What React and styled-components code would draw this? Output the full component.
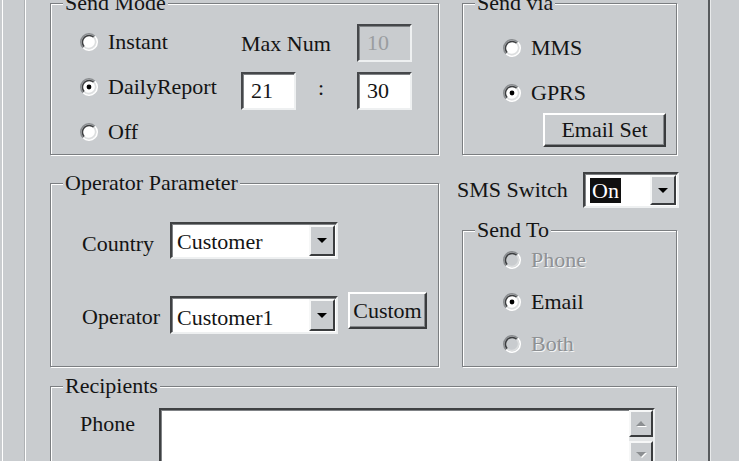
import styled, { createGlobalStyle } from "styled-components";

const FACE = "#c9cccf";
const INK = "#141414";
const SERIF = `"Liberation Serif", "Times New Roman", "DejaVu Serif", serif`;

const GlobalStyle = createGlobalStyle`
  html, body { margin: 0; padding: 0; background: ${FACE}; overflow: hidden; }
  body {
    font-family: ${SERIF};
    font-size: 22px;
    color: ${INK};
  }
  * { box-sizing: border-box; }
`;

const Screen = styled.div`
  width: 737px;
  height: 461px;
  margin-left: 2px;
  border-left: 1px solid #fff;
  overflow: hidden;
  font-family: ${SERIF};
  font-size: 22px;
`;

const Frame = styled.div`
  margin-left: 21px;
  width: 686px;
  min-height: 461px;
  border-left: 1px solid #aeb1b4;
  border-right: 2px solid #575a5d;
  box-shadow: inset 1px 0 0 #fff, 1px 0 0 #e8eaeb;
  padding: 3px 0 0 25px;
`;

const Layout = styled.div`
  display: grid;
  grid-template-columns: 389px 215px;
  grid-template-rows: 152px auto auto;
  column-gap: 23px;
  row-gap: 17px;
`;

const GroupBox = styled.div`
  position: relative;
  border: 1px solid #7b7e81;
  box-shadow: inset 1px 1px 0 #fff, 1px 1px 0 #fff;
  height: ${(p) => p.$h}px;
  margin-top: ${(p) => p.$mt || 0}px;
  padding: ${(p) => p.$pad};
  grid-column: ${(p) => (p.$span ? "1 / -1" : "auto")};
`;

const Caption = styled.span`
  position: absolute;
  top: -13px;
  left: 12px;
  padding: 0 2px;
  line-height: 24px;
  background: ${FACE};
  white-space: nowrap;
`;

const RadioRow = styled.div`
  display: flex;
  align-items: center;
  gap: 10px;
  height: ${(p) => p.$h || 38}px;
  white-space: nowrap;
  color: ${(p) => (p.$disabled ? "#8e9194" : INK)};
  text-shadow: ${(p) => (p.$disabled ? "1px 1px 0 #f4f5f5" : "none")};
`;

const RadioStack = styled.div`
  display: flex;
  flex-direction: column;
  gap: ${(p) => p.$gap}px;
`;

const SendModeGrid = styled.div`
  display: grid;
  grid-template-columns: 161px 55px 61px 55px;
  grid-template-rows: 38px 38px 38px;
  row-gap: 7px;
  align-items: center;
`;

const FieldLabel = styled.span`
  grid-column: ${(p) => p.$col || "auto"};
  white-space: nowrap;
  padding-top: ${(p) => p.$pt || 0}px;
  align-self: ${(p) => p.$self || "center"};
`;

const Colon = styled.span`
  padding-left: 22px;
  margin-top: 2px;
`;

const TextBox = styled.div`
  width: 55px;
  height: 38px;
  align-self: start;
  grid-column: ${(p) => p.$col || "auto"};
  margin-top: ${(p) => p.$mt || 0}px;
  background: ${(p) => (p.$disabled ? FACE : "#fff")};
  color: ${(p) => (p.$disabled ? "#9a9da0" : INK)};
  border: 2px solid;
  border-color: #45474a #eef0f1 #eef0f1 #45474a;
  box-shadow: inset 1px 1px 0 #808386;
  padding-left: 8px;
  display: flex;
  align-items: center;
`;

const Button = styled.button`
  font-family: ${SERIF};
  font-size: 22px;
  color: ${INK};
  background: ${FACE};
  width: ${(p) => p.$w}px;
  height: ${(p) => p.$h}px;
  margin-top: ${(p) => p.$mt || 0}px;
  margin-right: ${(p) => p.$mr || 0}px;
  margin-left: ${(p) => p.$ml || 0}px;
  align-self: ${(p) => p.$self || "auto"};
  border: 2px solid;
  border-color: #fff #3a3c3e #3a3c3e #fff;
  box-shadow: inset -1px -1px 0 #85888b;
  padding: 0;
  line-height: 1;
`;

const ViaStack = styled.div`
  display: flex;
  flex-direction: column;
  gap: 7px;
`;

const OperatorGrid = styled.div`
  display: grid;
  grid-template-columns: 88px 168px 89px;
  grid-template-rows: 37px 38px;
  row-gap: 37px;
  align-items: center;
`;

const Combo = styled.div`
  display: flex;
  width: ${(p) => p.$w}px;
  height: ${(p) => p.$h}px;
  background: #fff;
  border: 2px solid;
  border-color: #3f4143 #eef0f1 #eef0f1 #3f4143;
  box-shadow: inset 1px 1px 0 #808386;
`;

const ComboText = styled.span`
  flex: 1;
  display: flex;
  align-items: center;
  padding-left: 5px;
  padding-top: ${(p) => p.$pt || 0}px;
  white-space: nowrap;
`;

const Highlight = styled.span`
  background: #101010;
  color: #fff;
  line-height: 25px;
  padding: 0 2px;
`;

const DropButton = styled.span`
  width: 26px;
  margin: 1px;
  background: ${FACE};
  border: 2px solid;
  border-color: #f6f7f7 #3a3c3e #3a3c3e #f6f7f7;
  display: flex;
  align-items: center;
  justify-content: center;
`;

const Arrow = styled.span`
  width: 0;
  height: 0;
  border-left: ${(p) => p.$size}px solid transparent;
  border-right: ${(p) => p.$size}px solid transparent;
  border-${(p) => (p.$up ? "bottom" : "top")}: ${(p) => p.$size}px solid ${(p) => p.$color};
  filter: ${(p) => (p.$soft ? "drop-shadow(1px 1px 0 #fff)" : "none")};
`;

const RightStack = styled.div`
  display: flex;
  flex-direction: column;
`;

const SwitchRow = styled.div`
  display: flex;
  align-items: center;
  justify-content: space-between;
  height: 36px;
  margin: 0 -2px 0 -5px;
`;

const RecipientsGrid = styled.div`
  display: grid;
  grid-template-columns: 79px 496px;
  align-items: start;
`;

const MemoBox = styled.div`
  display: flex;
  height: 110px;
  background: #fff;
  border: 2px solid;
  border-color: #3f4143 #eef0f1 #eef0f1 #3f4143;
  box-shadow: inset 1px 1px 0 #808386;
`;

const MemoText = styled.div`
  flex: 1;
`;

const ScrollBar = styled.div`
  width: 24px;
  display: flex;
  flex-direction: column;
  gap: 4px;
  background: #e3e5e6;
`;

const ScrollButton = styled.span`
  height: 27px;
  background: ${FACE};
  border: 2px solid;
  border-color: #f6f7f7 #3a3c3e #3a3c3e #f6f7f7;
  display: flex;
  align-items: center;
  justify-content: center;
`;

function Radio({ checked, disabled, h, children }) {
  return (
    <RadioRow $disabled={disabled} $h={h}>
      <svg width="18" height="18" viewBox="0 0 12 12">
        <circle cx="6" cy="6" r="5" fill={disabled ? FACE : "#fff"} />
        <path d="M2.11 9.89A5.5 5.5 0 0 1 9.89 2.11" fill="none" stroke="#8a8d90" />
        <path d="M2.82 9.18A4.5 4.5 0 0 1 9.18 2.82" fill="none" stroke="#3c3e40" />
        <path d="M9.89 2.11A5.5 5.5 0 0 1 2.11 9.89" fill="none" stroke="#fff" />
        <path d="M9.18 2.82A4.5 4.5 0 0 1 2.82 9.18" fill="none" stroke="#dcdedf" />
        {checked && <circle cx="6" cy="6" r="1.6" fill="#000" />}
      </svg>
      <span>{children}</span>
    </RadioRow>
  );
}

function ComboBox({ w, h, pt, children }) {
  return (
    <Combo $w={w} $h={h}>
      <ComboText $pt={pt}>{children}</ComboText>
      <DropButton>
        <Arrow $size={5} $color="#000" />
      </DropButton>
    </Combo>
  );
}

export default function App() {
  return (
    <Screen>
      <GlobalStyle />
      <Frame>
        <Layout>
          {/* Send Mode */}
          <GroupBox $h={152} $pad="19px 0 0 29px">
            <Caption>Send Mode</Caption>
            <SendModeGrid>
              <Radio>Instant</Radio>
              <FieldLabel $col="2 / 4" $pt={4}>Max Num</FieldLabel>
              <TextBox $disabled $col={4} $mt={1}>10</TextBox>
              <Radio checked>DailyReport</Radio>
              <TextBox $mt={4}>21</TextBox>
              <Colon>:</Colon>
              <TextBox $mt={4}>30</TextBox>
              <Radio>Off</Radio>
            </SendModeGrid>
          </GroupBox>

          {/* Send via */}
          <GroupBox $h={152} $pad="25px 0 0 40px">
            <Caption>Send via</Caption>
            <ViaStack>
              <Radio>MMS</Radio>
              <Radio checked>GPRS</Radio>
              <Button $w={123} $h={34} $mt={-6} $mr={10} $self="flex-end">Email Set</Button>
            </ViaStack>
          </GroupBox>

          {/* Operator Parameter */}
          <GroupBox $h={184} $mt={11} $pad="38px 0 0 31px">
            <Caption>Operator Parameter</Caption>
            <OperatorGrid>
              <FieldLabel $pt={6}>Country</FieldLabel>
              <ComboBox w={168} h={37} pt={2}>Customer</ComboBox>
              <span />
              <FieldLabel $pt={4}>Operator</FieldLabel>
              <ComboBox w={168} h={38} pt={6}>Customer1</ComboBox>
              <Button $w={79} $h={37} $mt={-4} $ml={10} $self="start">Custom</Button>
            </OperatorGrid>
          </GroupBox>

          <RightStack>
            <SwitchRow>
              <span>SMS Switch</span>
              <Combo $w={96} $h={36}>
                <ComboText>
                  <Highlight>On</Highlight>
                </ComboText>
                <DropButton>
                  <Arrow $size={5} $color="#000" />
                </DropButton>
              </Combo>
            </SwitchRow>
            {/* Send To */}
            <GroupBox $h={137} $mt={22} $pad="11px 0 0 40px">
              <Caption>Send To</Caption>
              <RadioStack $gap={6}>
                <Radio disabled h={36}>Phone</Radio>
                <Radio checked h={36}>Email</Radio>
                <Radio disabled h={36}>Both</Radio>
              </RadioStack>
            </GroupBox>
          </RightStack>

          {/* Recipients */}
          <GroupBox $span $h={140} $mt={2} $pad="21px 0 0 29px">
            <Caption>Recipients</Caption>
            <RecipientsGrid>
              <FieldLabel $pt={3} $self="start">Phone</FieldLabel>
              <MemoBox>
                <MemoText />
                <ScrollBar>
                  <ScrollButton>
                    <Arrow $up $size={5} $color="#8c8f92" $soft />
                  </ScrollButton>
                  <ScrollButton>
                    <Arrow $size={5} $color="#8c8f92" $soft />
                  </ScrollButton>
                </ScrollBar>
              </MemoBox>
            </RecipientsGrid>
          </GroupBox>
        </Layout>
      </Frame>
    </Screen>
  );
}
